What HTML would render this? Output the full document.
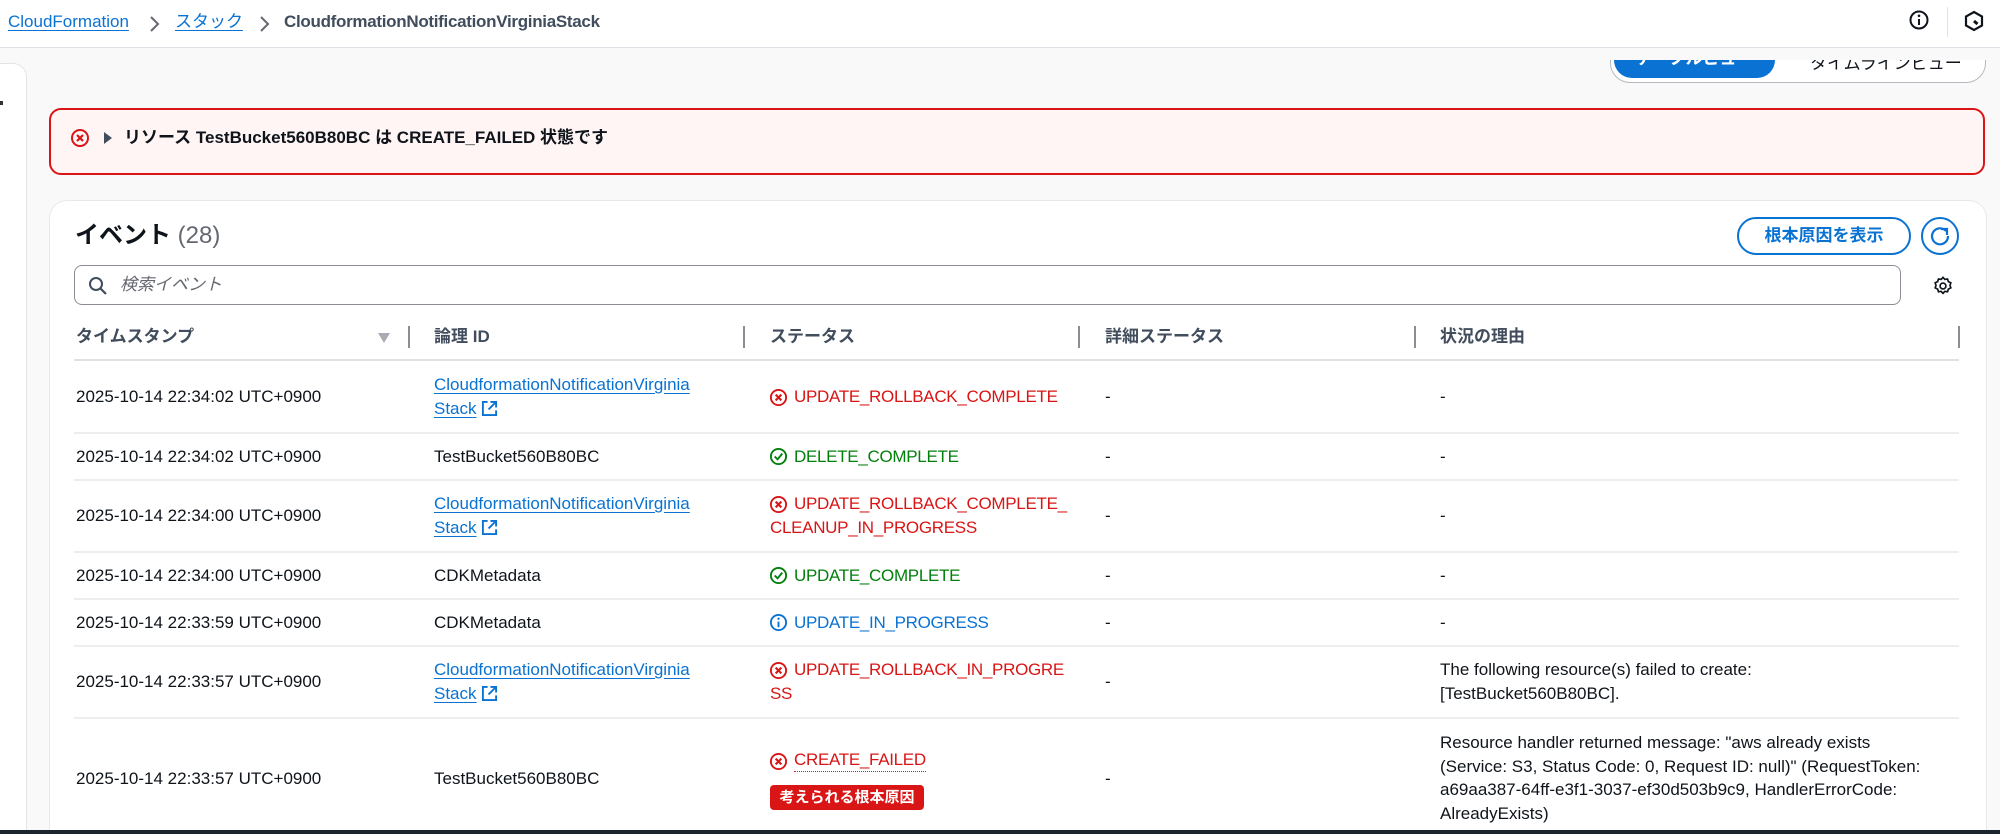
<!DOCTYPE html>
<html><head><meta charset="utf-8"><style>
*{box-sizing:border-box;margin:0;padding:0}
html,body{width:2000px;height:834px;overflow:hidden}
body{background:#f9f9fa;font-family:"Liberation Sans","Noto Sans CJK JP",sans-serif;color:#0f141a;position:relative}
.a{position:absolute;white-space:nowrap}
.hdr{position:absolute;left:0;top:0;width:2000px;height:48px;background:#fff;border-bottom:1px solid #dcdfe3}
.lnk{color:#0972d3;text-decoration:underline;text-underline-offset:3px}
.t{font-size:17px;line-height:24px}
.red{color:#d91515;letter-spacing:-0.3px}.grn{color:#037f0c;letter-spacing:-0.3px}.blu{color:#0972d3;letter-spacing:-0.3px}
.sep{position:absolute;left:74px;width:1885px;height:2px;background:#eceef0}
.vd{position:absolute;top:326px;width:2px;height:22px;background:#8c8c94}
svg{position:absolute}
</style></head><body>
<div class="hdr"></div>
<div class="a t" style="left:8px;top:10px;font-size:17px"><span class="lnk">CloudFormation</span></div>
<svg style="left:148px;top:15px" width="12" height="18" viewBox="0 0 12 18"><path d="M3 2 L10 9 L3 16" fill="none" stroke="#656871" stroke-width="2"/></svg>
<div class="a t" style="left:175px;top:10px"><span class="lnk">スタック</span></div>
<svg style="left:258px;top:15px" width="12" height="18" viewBox="0 0 12 18"><path d="M3 2 L10 9 L3 16" fill="none" stroke="#656871" stroke-width="2"/></svg>
<div class="a t" style="left:284px;top:10px;font-weight:bold;color:#414d5c;letter-spacing:-0.3px">CloudformationNotificationVirginiaStack</div>
<svg style="left:1908px;top:9px" width="22" height="22" viewBox="0 0 22 22"><circle cx="11" cy="11" r="8.5" fill="none" stroke="#0f141a" stroke-width="2"/><line x1="11" y1="10" x2="11" y2="16" stroke="#0f141a" stroke-width="2"/><circle cx="11" cy="6.8" r="1.3" fill="#0f141a"/></svg>
<div class="a" style="left:1947px;top:7px;width:1px;height:30px;background:#e0e2e5"></div>
<svg style="left:1963px;top:10px" width="22" height="22" viewBox="0 0 22 22"><path d="M11 2 L19 6.5 V15.5 L11 20 L3 15.5 V6.5Z" fill="none" stroke="#0f141a" stroke-width="2.2"/><path d="M11 11 L14.5 14" stroke="#0f141a" stroke-width="3"/></svg>
<div class="a" style="left:-20px;top:63px;width:47px;height:771px;background:#fff;border:1px solid #e2e4e7;border-radius:14px 14px 0 0;border-bottom:none"></div>
<div class="a" style="left:0;top:101px;width:3px;height:4px;background:#333"></div>
<div class="a" style="left:1610px;top:60px;width:376px;height:24px;overflow:hidden">
 <div style="position:absolute;left:0;top:-20px;width:376px;height:43px;background:#fff;border:1px solid #b4b8bf;border-radius:20px"></div>
 <div style="position:absolute;left:4px;top:-20px;width:161px;height:38px;background:#0972d3;border-radius:18px;color:#fff;font-weight:bold;font-size:17px;text-align:center;line-height:38px">テーブルビュー</div>
 <div style="position:absolute;left:200px;top:-11px;font-size:17px;color:#0f141a">タイムラインビュー</div>
</div>
<div class="a" style="left:49px;top:108px;width:1936px;height:67px;background:#fff5f5;border:2px solid #d91515;border-radius:12px"></div>
<svg style="left:70px;top:128px" width="20" height="20" viewBox="0 0 20 20"><circle cx="10" cy="10" r="8" fill="none" stroke="#d91515" stroke-width="2"/><path d="M7 7 L13 13 M13 7 L7 13" stroke="#d91515" stroke-width="2.2"/></svg>
<svg style="left:102px;top:131px" width="12" height="14" viewBox="0 0 12 14"><path d="M2 1 L10 7 L2 13Z" fill="#414d5c"/></svg>
<div class="a" style="left:124px;top:126px;font-size:17px;font-weight:bold;color:#0f141a;line-height:24px">リソース TestBucket560B80BC は CREATE_FAILED 状態です</div>
<div class="a" style="left:49px;top:200px;width:1938px;height:634px;background:#fff;border:1px solid #e6e8eb;border-bottom:none;border-radius:18px 18px 0 0"></div>
<div class="a" style="left:75px;top:220px;font-size:24px;font-weight:bold;line-height:32px">イベント <span style="font-weight:normal;color:#656871">(28)</span></div>
<div class="a" style="left:1737px;top:217px;width:174px;height:38px;border:2px solid #0972d3;border-radius:20px;color:#0972d3;font-weight:bold;font-size:17px;text-align:center;line-height:34px">根本原因を表示</div>
<div class="a" style="left:1921px;top:217px;width:38px;height:38px;border:2px solid #0972d3;border-radius:50%"></div>
<svg style="left:1929px;top:225px" width="22" height="22" viewBox="0 0 22 22"><path d="M17 6 A8 8 0 1 0 19 11" fill="none" stroke="#0972d3" stroke-width="2.2"/><path d="M12 4 H18 V10" fill="none" stroke="#0972d3" stroke-width="2.2"/></svg>
<div class="a" style="left:74px;top:265px;width:1827px;height:40px;border:1px solid #8c8c94;border-radius:8px;background:#fff"></div>
<svg style="left:88px;top:276px" width="20" height="20" viewBox="0 0 20 20"><circle cx="8" cy="8" r="6" fill="none" stroke="#414d5c" stroke-width="2"/><path d="M12.5 12.5 L18 18" stroke="#414d5c" stroke-width="2.2"/></svg>
<div class="a" style="left:120px;top:273px;font-size:17px;font-style:italic;color:#656871;line-height:24px">検索イベント</div>
<svg style="left:1932px;top:275px" width="22" height="22" viewBox="0 0 24 24"><path d="M12 2.5 l2 2.3 3-.5 .8 2.9 2.8 1.3-1 2.8 1 2.8-2.8 1.3-.8 2.9-3-.5-2 2.3-2-2.3-3 .5-.8-2.9-2.8-1.3 1-2.8-1-2.8 2.8-1.3.8-2.9 3 .5z" fill="none" stroke="#0f141a" stroke-width="1.8" stroke-linejoin="round"/><circle cx="12" cy="12" r="3.2" fill="none" stroke="#0f141a" stroke-width="1.8"/></svg>
<div class="a t" style="left:76px;top:325px;font-weight:bold;color:#414d5c">タイムスタンプ</div>
<svg style="left:377px;top:332px" width="14" height="12" viewBox="0 0 14 12"><path d="M1 1 H13 L7 11Z" fill="#a8acb2"/></svg>
<div class="vd" style="left:408px"></div>
<div class="a t" style="left:434px;top:325px;font-weight:bold;color:#414d5c">論理 ID</div>
<div class="vd" style="left:743px"></div>
<div class="a t" style="left:770px;top:325px;font-weight:bold;color:#414d5c">ステータス</div>
<div class="vd" style="left:1078px"></div>
<div class="a t" style="left:1105px;top:325px;font-weight:bold;color:#414d5c">詳細ステータス</div>
<div class="vd" style="left:1414px"></div>
<div class="a t" style="left:1440px;top:325px;font-weight:bold;color:#414d5c">状況の理由</div>
<div class="vd" style="left:1958px"></div>
<div class="sep" style="top:359px;background:#dfe1e4"></div>
<div class="sep" style="top:432px"></div>
<div class="sep" style="top:479px"></div>
<div class="sep" style="top:551px"></div>
<div class="sep" style="top:598px"></div>
<div class="sep" style="top:645px"></div>
<div class="sep" style="top:717px"></div>

<svg width="0" height="0"><defs>
<symbol id="x" viewBox="0 0 20 20"><circle cx="10" cy="10" r="8" fill="none" stroke="#d91515" stroke-width="2"/><path d="M7 7 L13 13 M13 7 L7 13" stroke="#d91515" stroke-width="2.2"/></symbol>
<symbol id="ok" viewBox="0 0 20 20"><circle cx="10" cy="10" r="8" fill="none" stroke="#037f0c" stroke-width="2"/><path d="M6 10 L9 13 L14 7" fill="none" stroke="#037f0c" stroke-width="2"/></symbol>
<symbol id="in" viewBox="0 0 20 20"><circle cx="10" cy="10" r="8" fill="none" stroke="#0972d3" stroke-width="2"/><path d="M10 9 V15" stroke="#0972d3" stroke-width="2"/><circle cx="10" cy="6" r="1.2" fill="#0972d3"/></symbol>
<symbol id="ext" viewBox="0 0 18 18"><path d="M7 2 H2 V16 H16 V11" fill="none" stroke="#0972d3" stroke-width="2"/><path d="M10 2 H16 V8 M16 2 L8 10" fill="none" stroke="#0972d3" stroke-width="2"/></symbol>
</defs></svg>

<div class="a t" style="left:76px;top:385px">2025-10-14 22:34:02 UTC+0900</div>
<div class="a t" style="left:434px;top:373px"><span class="lnk">CloudformationNotificationVirginia</span><br><span class="lnk">Stack</span></div>
<svg style="left:481px;top:400px" width="17" height="17"><use href="#ext"/></svg>
<svg style="left:769px;top:388px" width="19" height="19"><use href="#x"/></svg>
<div class="a t red" style="left:794px;top:385px">UPDATE_ROLLBACK_COMPLETE</div>
<div class="a t" style="left:1105px;top:385px">-</div><div class="a t" style="left:1440px;top:385px">-</div>

<div class="a t" style="left:76px;top:445px">2025-10-14 22:34:02 UTC+0900</div>
<div class="a t" style="left:434px;top:445px">TestBucket560B80BC</div>
<svg style="left:769px;top:447px" width="19" height="19"><use href="#ok"/></svg>
<div class="a t grn" style="left:794px;top:445px">DELETE_COMPLETE</div>
<div class="a t" style="left:1105px;top:445px">-</div><div class="a t" style="left:1440px;top:445px">-</div>

<div class="a t" style="left:76px;top:504px">2025-10-14 22:34:00 UTC+0900</div>
<div class="a t" style="left:434px;top:492px"><span class="lnk">CloudformationNotificationVirginia</span><br><span class="lnk">Stack</span></div>
<svg style="left:481px;top:519px" width="17" height="17"><use href="#ext"/></svg>
<svg style="left:769px;top:495px" width="19" height="19"><use href="#x"/></svg>
<div class="a t red" style="left:794px;top:492px">UPDATE_ROLLBACK_COMPLETE_</div>
<div class="a t red" style="left:770px;top:516px">CLEANUP_IN_PROGRESS</div>
<div class="a t" style="left:1105px;top:504px">-</div><div class="a t" style="left:1440px;top:504px">-</div>

<div class="a t" style="left:76px;top:564px">2025-10-14 22:34:00 UTC+0900</div>
<div class="a t" style="left:434px;top:564px">CDKMetadata</div>
<svg style="left:769px;top:566px" width="19" height="19"><use href="#ok"/></svg>
<div class="a t grn" style="left:794px;top:564px">UPDATE_COMPLETE</div>
<div class="a t" style="left:1105px;top:564px">-</div><div class="a t" style="left:1440px;top:564px">-</div>

<div class="a t" style="left:76px;top:611px">2025-10-14 22:33:59 UTC+0900</div>
<div class="a t" style="left:434px;top:611px">CDKMetadata</div>
<svg style="left:769px;top:613px" width="19" height="19"><use href="#in"/></svg>
<div class="a t blu" style="left:794px;top:611px">UPDATE_IN_PROGRESS</div>
<div class="a t" style="left:1105px;top:611px">-</div><div class="a t" style="left:1440px;top:611px">-</div>

<div class="a t" style="left:76px;top:670px">2025-10-14 22:33:57 UTC+0900</div>
<div class="a t" style="left:434px;top:658px"><span class="lnk">CloudformationNotificationVirginia</span><br><span class="lnk">Stack</span></div>
<svg style="left:481px;top:685px" width="17" height="17"><use href="#ext"/></svg>
<svg style="left:769px;top:661px" width="19" height="19"><use href="#x"/></svg>
<div class="a t red" style="left:794px;top:658px">UPDATE_ROLLBACK_IN_PROGRE</div>
<div class="a t red" style="left:770px;top:682px">SS</div>
<div class="a t" style="left:1105px;top:670px">-</div>
<div class="a t" style="left:1440px;top:658px">The following resource(s) failed to create:<br>[TestBucket560B80BC].</div>

<div class="a t" style="left:76px;top:767px">2025-10-14 22:33:57 UTC+0900</div>
<div class="a t" style="left:434px;top:767px">TestBucket560B80BC</div>
<svg style="left:769px;top:752px" width="19" height="19"><use href="#x"/></svg>
<div class="a t red" style="left:794px;top:749px;border-bottom:1px dotted #d91515;line-height:22px">CREATE_FAILED</div>
<div class="a" style="left:770px;top:785px;width:154px;height:25px;background:#d91515;border-radius:4px;color:#fff;font-weight:bold;font-size:15px;line-height:25px;text-align:center">考えられる根本原因</div>
<div class="a t" style="left:1105px;top:767px">-</div>
<div class="a t" style="left:1440px;top:731px;line-height:23.5px">Resource handler returned message: "aws already exists<br>(Service: S3, Status Code: 0, Request ID: null)" (RequestToken:<br>a69aa387-64ff-e3f1-3037-ef30d503b9c9, HandlerErrorCode:<br>AlreadyExists)</div>
<div class="a" style="left:0;top:830px;width:2000px;height:4px;background:#1b232d"></div>
</body></html>
